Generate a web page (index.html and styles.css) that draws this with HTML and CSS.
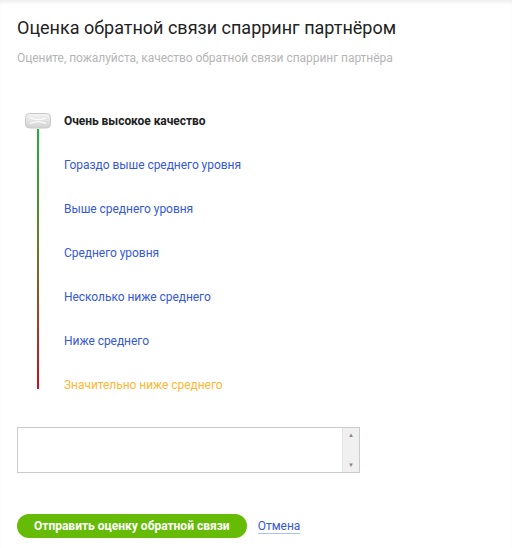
FILE: index.html
```html
<!DOCTYPE html>
<html lang="ru">
<head>
    <meta charset="UTF-8">
    <meta name="viewport" content="width=device-width, initial-scale=1.0">
    <title>Оценка обратной связи</title>
    <link rel="stylesheet" href="styles.css">
</head>
<body>

<div class="feedback">
    <h2 class="feedback-title">Оценка обратной связи спарринг партнёром</h2>
    <p class="feedback-hint">Оцените, пожалуйста, качество обратной связи спарринг партнёра</p>

    <div class="rating">
        <div class="rating-track">
            <svg class="rating-handle" width="26" height="16" viewBox="0 0 26 16">
                <defs>
                    <linearGradient id="handle-bg" x1="0" y1="0" x2="0" y2="1">
                        <stop offset="0" stop-color="#f4f4f4"/>
                        <stop offset="1" stop-color="#d2d2d2"/>
                    </linearGradient>
                </defs>
                <rect x="0.5" y="0.5" width="25" height="14.5" rx="4" fill="url(#handle-bg)" stroke="#c8c8c8"/>
                <path d="M5 5 Q13 8.5 21 5" fill="none" stroke="#fff" stroke-width="1.2"/>
                <path d="M5 10.5 Q13 7 21 10.5" fill="none" stroke="#fff" stroke-width="1.2"/>
            </svg>
            <div class="rating-line"></div>
        </div>
        <ul class="rating-list">
            <li class="rating-item active">Очень высокое качество</li>
            <li class="rating-item">Гораздо выше среднего уровня</li>
            <li class="rating-item">Выше среднего уровня</li>
            <li class="rating-item">Среднего уровня</li>
            <li class="rating-item">Несколько ниже среднего</li>
            <li class="rating-item">Ниже среднего</li>
            <li class="rating-item warn">Значительно ниже среднего</li>
        </ul>
    </div>

    <!-- comment box -->
    <div class="comment-box">
        <textarea class="comment-text"></textarea>
        <div class="comment-scroll">
            <span class="arrow">&#9650;</span>
            <span class="arrow">&#9660;</span>
        </div>
    </div>

    <div class="actions">
        <button class="send-btn">Отправить оценку обратной связи</button>
        <a href="#" class="cancel-link">Отмена</a>
    </div>
</div>

</body>
</html>
```

FILE: styles.css
```css
body {
    margin: 0;
    font-family: Roboto, "Liberation Sans", sans-serif;
    background: #fff;
    box-shadow: inset 0 4px 4px -2px rgba(0, 0, 0, 0.08);
    min-height: 548px;
}

.feedback {
    padding: 14px 17px 0;
}

.feedback-title {
    margin: 0;
    font-size: 18px;
    font-weight: 400;
    color: #222;
    line-height: 28px;
}

.feedback-hint {
    margin: 8px 0 0;
    font-size: 12px;
    color: #b5b5b5;
    line-height: 16px;
    letter-spacing: -0.05px;
}

.rating {
    display: flex;
    margin-top: 47px;
}

.rating-track {
    display: flex;
    flex-direction: column;
    align-items: center;
    margin-left: 7px;
    width: 28px;
}

.rating-handle {
    display: block;
}

.rating-line {
    width: 2px;
    height: 260px;
    background: linear-gradient(#19b53a, #6b7a24 45%, #d30b1c);
}

.rating-list {
    list-style: none;
    margin: 0;
    padding: 0 0 0 12px;
}

.rating-item {
    font-size: 12px;
    line-height: 16px;
    color: #3558d6;
    margin-bottom: 28px;
    letter-spacing: -0.05px;
}

.rating-item:last-child {
    margin-bottom: 0;
}

.rating-item.active {
    color: #222;
    font-weight: 700;
}

.rating-item.warn {
    color: #ffb733;
}

.comment-box {
    display: flex;
    width: 341px;
    height: 44px;
    border: 1px solid #cbcbcb;
    margin-top: 34px;
}

.comment-text {
    flex: 1;
    border: none;
    resize: none;
    outline: none;
    padding: 4px;
    margin: 0;
}

.comment-scroll {
    width: 16px;
    background: #f0f0f0;
    border-left: 1px solid #e4e4e4;
    display: flex;
    flex-direction: column;
    justify-content: space-between;
    align-items: center;
    padding: 3px 0;
}

.arrow {
    font-size: 6px;
    color: #888;
    line-height: 8px;
}

.actions {
    display: flex;
    align-items: center;
    margin-top: 41px;
}

.send-btn {
    background-color: #66bb06;
    color: #fff;
    border: none;
    border-radius: 12px;
    height: 24px;
    padding: 0 17px;
    font-family: Roboto, "Liberation Sans", sans-serif;
    font-size: 12px;
    font-weight: 700;
    cursor: pointer;
}

.cancel-link {
    margin-left: 11px;
    font-size: 12px;
    color: #3558d6;
    text-decoration: none;
    border-bottom: 1px solid #a9c3f0;
    line-height: 14px;
}
```
